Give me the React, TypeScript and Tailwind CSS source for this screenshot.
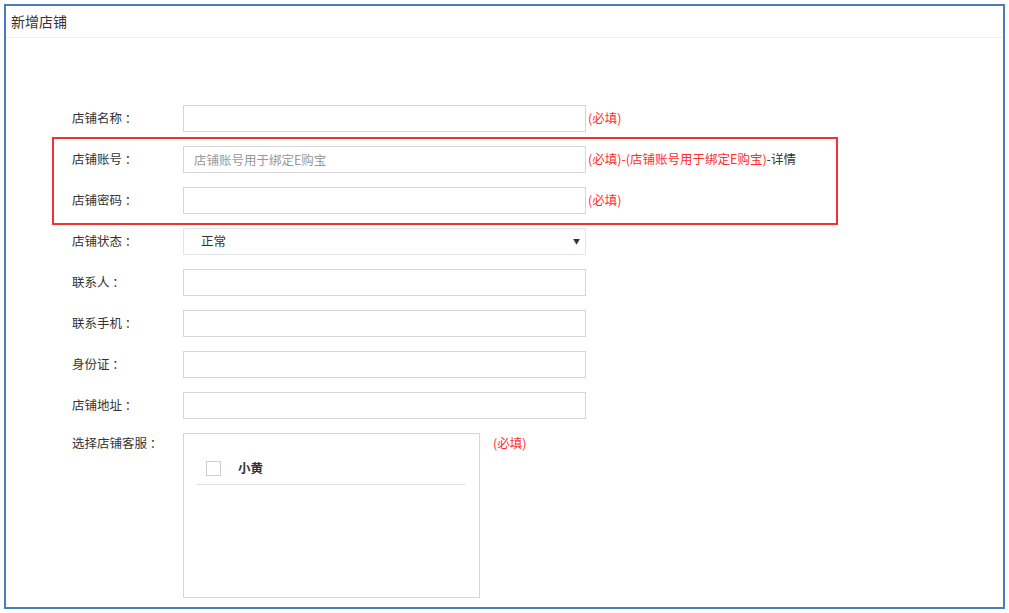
import React from "react";

const font = { fontFamily: '"Noto Sans CJK SC", "Liberation Sans", sans-serif' };

function Row({ label, children, note }: { label: string; children: React.ReactNode; note?: React.ReactNode }) {
  return (
    <div className="flex h-[27px] items-center">
      <div className="w-[111px] text-[12.5px] text-[#333]">{label}</div>
      {children}
      {note && <div className="ml-[2px] text-[12.5px]">{note}</div>}
    </div>
  );
}

function Input({ placeholder }: { placeholder?: string }) {
  return (
    <input
      className="h-[27px] w-[403px] border border-[#d6d6d6] bg-white px-[10px] text-[12.5px] text-[#333] outline-none placeholder:text-[#999]"
      placeholder={placeholder}
      style={font}
    />
  );
}

const Required = () => <span className="text-[#ff2d2d]">(必填)</span>;

export default function App() {
  return (
    <div className="h-[613px] w-[1009px] bg-white p-[4px]" style={font}>
      <div className="relative h-[605px] border-2 border-[#4a7ebb]">
        <div className="flex h-[32px] items-center border-b border-[#eeeeee] pl-[5px] text-[14px] text-[#333]">
          新增店铺
        </div>

        <div className="flex flex-col gap-[14px] pl-[66px] pt-[67px]">
          <Row label="店铺名称 ：" note={<Required />}>
            <Input />
          </Row>
          <Row
            label="店铺账号 ："
            note={
              <>
                <span className="text-[#ff2d2d]">(必填)-(店铺账号用于绑定E购宝)</span>
                <span className="text-[#333]">-详情</span>
              </>
            }
          >
            <Input placeholder="店铺账号用于绑定E购宝" />
          </Row>
          <Row label="店铺密码 ：" note={<Required />}>
            <Input />
          </Row>
          <Row label="店铺状态 ：">
            <div className="flex h-[27px] w-[403px] items-center justify-between border border-[#e4e4e4] pl-[17px] pr-[5px] text-[12.5px] text-[#333]">
              <span>正常</span>
              <span className="text-[7px]">▼</span>
            </div>
          </Row>
          <Row label="联系人 ：">
            <Input />
          </Row>
          <Row label="联系手机 ：">
            <Input />
          </Row>
          <Row label="身份证 ：">
            <Input />
          </Row>
          <Row label="店铺地址 ：">
            <Input />
          </Row>
          <div className="flex items-start">
            <div className="w-[111px] pt-[1px] text-[12.5px] text-[#333]">选择店铺客服 ：</div>
            <div className="h-[165px] w-[297px] border border-[#d6d6d6] px-[13px] pt-[25px]">
              <div className="flex items-center border-b border-[#e4e4e4] pb-[6px] pl-[9px]">
                <div className="h-[15px] w-[15px] border border-[#cfcfcf] bg-white" />
                <span className="ml-[17px] text-[12.5px] font-bold text-[#333]">小黄</span>
              </div>
            </div>
            <div className="ml-[13px] pt-[1px] text-[12.5px]">
              <Required />
            </div>
          </div>
        </div>

        <div className="pointer-events-none absolute left-[46px] top-[131px] h-[88px] w-[786px] border-2 border-[#ee3333]" />
      </div>
    </div>
  );
}
